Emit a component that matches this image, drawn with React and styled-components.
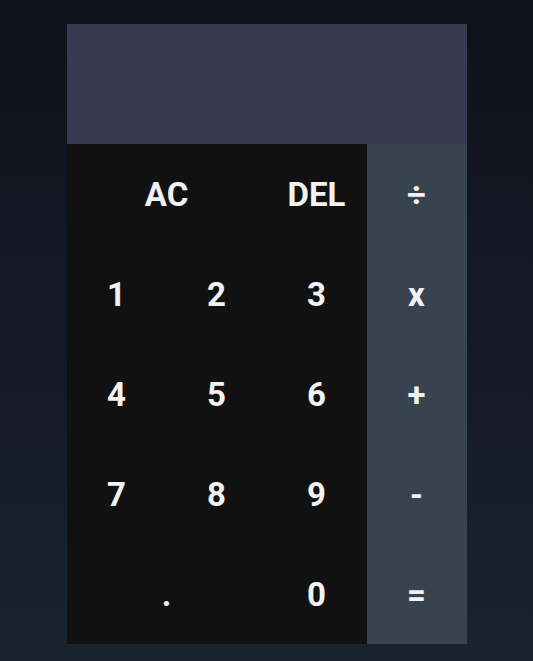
import React from "react";
import styled, { createGlobalStyle } from "styled-components";

const Global = createGlobalStyle`
  * { box-sizing: border-box; }
  html, body { margin: 0; padding: 0; }
  body {
    min-height: 100vh;
    font-family: Roboto, "Liberation Sans", sans-serif;
    background: radial-gradient(ellipse at 50% 100%, #1b2330 0%, #151b26 50%, #0f131b 100%);
    background-color: #0f131b;
  }
`;

const Page = styled.div`
  min-height: 100vh;
  display: flex;
  justify-content: center;
  align-items: flex-start;
  padding-top: 24px;
  background: linear-gradient(to bottom, #0e121b 0%, #141a24 50%, #1a2330 100%);
`;

const Calculator = styled.div`
  width: 400px;
  display: grid;
  grid-template-columns: repeat(4, 100px);
  grid-template-rows: 120px repeat(5, 100px);
`;

const Display = styled.div`
  grid-column: 1 / -1;
  background: #383950;
  color: #fff;
  display: flex;
  align-items: flex-end;
  justify-content: flex-end;
  padding: 16px;
  font-size: 40px;
`;

const Key = styled.button`
  grid-column: span ${(p) => p.$span || 1};
  border: none;
  margin: 0;
  padding: 0;
  background: ${(p) => (p.$op ? "#37444f" : "#111111")};
  color: #f2f2f2;
  font-family: Roboto, "Liberation Sans", sans-serif;
  font-weight: 700;
  font-size: 33px;
  cursor: pointer;
  display: flex;
  align-items: center;
  justify-content: center;
`;

const keys = [
  { l: "AC", span: 2 },
  { l: "DEL" },
  { l: "÷", op: true },
  { l: "1" }, { l: "2" }, { l: "3" }, { l: "x", op: true },
  { l: "4" }, { l: "5" }, { l: "6" }, { l: "+", op: true },
  { l: "7" }, { l: "8" }, { l: "9" }, { l: "-", op: true },
  { l: ".", span: 2 }, { l: "0" }, { l: "=", op: true },
];

export default function App() {
  return (
    <>
      <Global />
      <Page>
        <Calculator>
          <Display />
          {keys.map((k, i) => (
            <Key key={i} $span={k.span} $op={k.op}>{k.l}</Key>
          ))}
        </Calculator>
      </Page>
    </>
  );
}
